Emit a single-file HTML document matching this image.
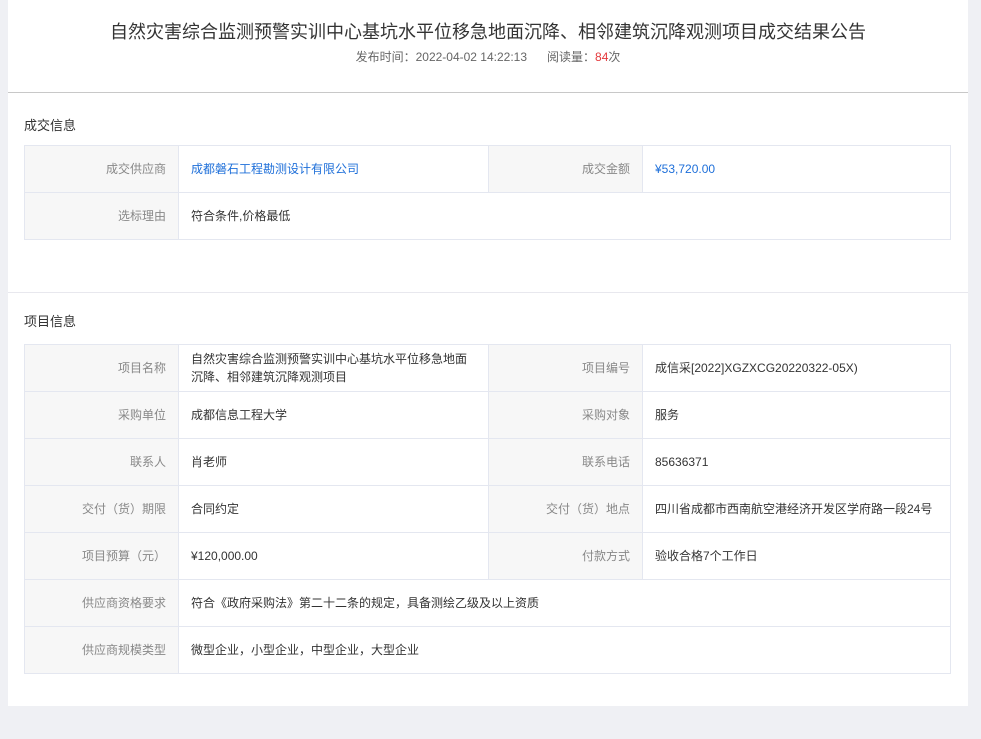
<!DOCTYPE html>
<html><head><meta charset="utf-8"><style>
*{margin:0;padding:0;box-sizing:border-box}
body{width:981px;height:739px;background:#eff0f4;font-family:"Liberation Sans","Noto Sans CJK SC",sans-serif;font-size:12px;color:#333;position:relative;overflow:hidden}
.panel{position:absolute;left:8px;top:0;width:960px;height:706px;background:#fff}
.title{position:absolute;top:18px;left:0;width:960px;text-align:center;font-size:18px;color:#333}
.meta{position:absolute;top:48px;left:0;width:960px;text-align:center;font-size:12px;color:#666}
.meta b{color:#e4393c;font-weight:normal}
.hr1{position:absolute;top:92px;left:0;width:960px;height:1px;background:#c8c8c8}
.hr2{position:absolute;top:292px;left:0;width:960px;height:1px;background:#e8e8ee}
.sec{position:absolute;left:16px;font-size:13px;color:#333}
table{position:absolute;left:16px;width:927px;border-collapse:collapse;table-layout:fixed}
td{border:1px solid #e4e7f0;height:47px;padding:0 12px;line-height:18px;vertical-align:middle}
td.l{background:#f7f7f7;color:#888;text-align:right;width:154px}
td.v{width:310px}
td.l2{width:154px}
a{color:#1e6fd9;text-decoration:none}
</style></head><body>
<div class="panel">
<div class="title">自然灾害综合监测预警实训中心基坑水平位移急地面沉降、相邻建筑沉降观测项目成交结果公告</div>
<div class="meta">发布时间：2022-04-02 14:22:13 &nbsp;&nbsp;&nbsp;&nbsp; 阅读量：<b>84</b>次</div>
<div class="hr1"></div>
<div class="sec" style="top:115px">成交信息</div>
<table style="top:145px">
<tr><td class="l">成交供应商</td><td class="v"><a>成都磐石工程勘测设计有限公司</a></td><td class="l l2">成交金额</td><td><a>¥53,720.00</a></td></tr>
<tr><td class="l">选标理由</td><td colspan="3">符合条件,价格最低</td></tr>
</table>
<div class="hr2"></div>
<div class="sec" style="top:311px">项目信息</div>
<table style="top:344px">
<tr><td class="l">项目名称</td><td class="v">自然灾害综合监测预警实训中心基坑水平位移急地面沉降、相邻建筑沉降观测项目</td><td class="l l2">项目编号</td><td>成信采[2022]XGZXCG20220322-05X)</td></tr>
<tr><td class="l">采购单位</td><td class="v">成都信息工程大学</td><td class="l l2">采购对象</td><td>服务</td></tr>
<tr><td class="l">联系人</td><td class="v">肖老师</td><td class="l l2">联系电话</td><td>85636371</td></tr>
<tr><td class="l">交付（货）期限</td><td class="v">合同约定</td><td class="l l2">交付（货）地点</td><td>四川省成都市西南航空港经济开发区学府路一段24号</td></tr>
<tr><td class="l">项目预算（元）</td><td class="v">¥120,000.00</td><td class="l l2">付款方式</td><td>验收合格7个工作日</td></tr>
<tr><td class="l">供应商资格要求</td><td colspan="3">符合《政府采购法》第二十二条的规定，具备测绘乙级及以上资质</td></tr>
<tr><td class="l">供应商规模类型</td><td colspan="3">微型企业，小型企业，中型企业，大型企业</td></tr>
</table>
</div>
</body></html>
